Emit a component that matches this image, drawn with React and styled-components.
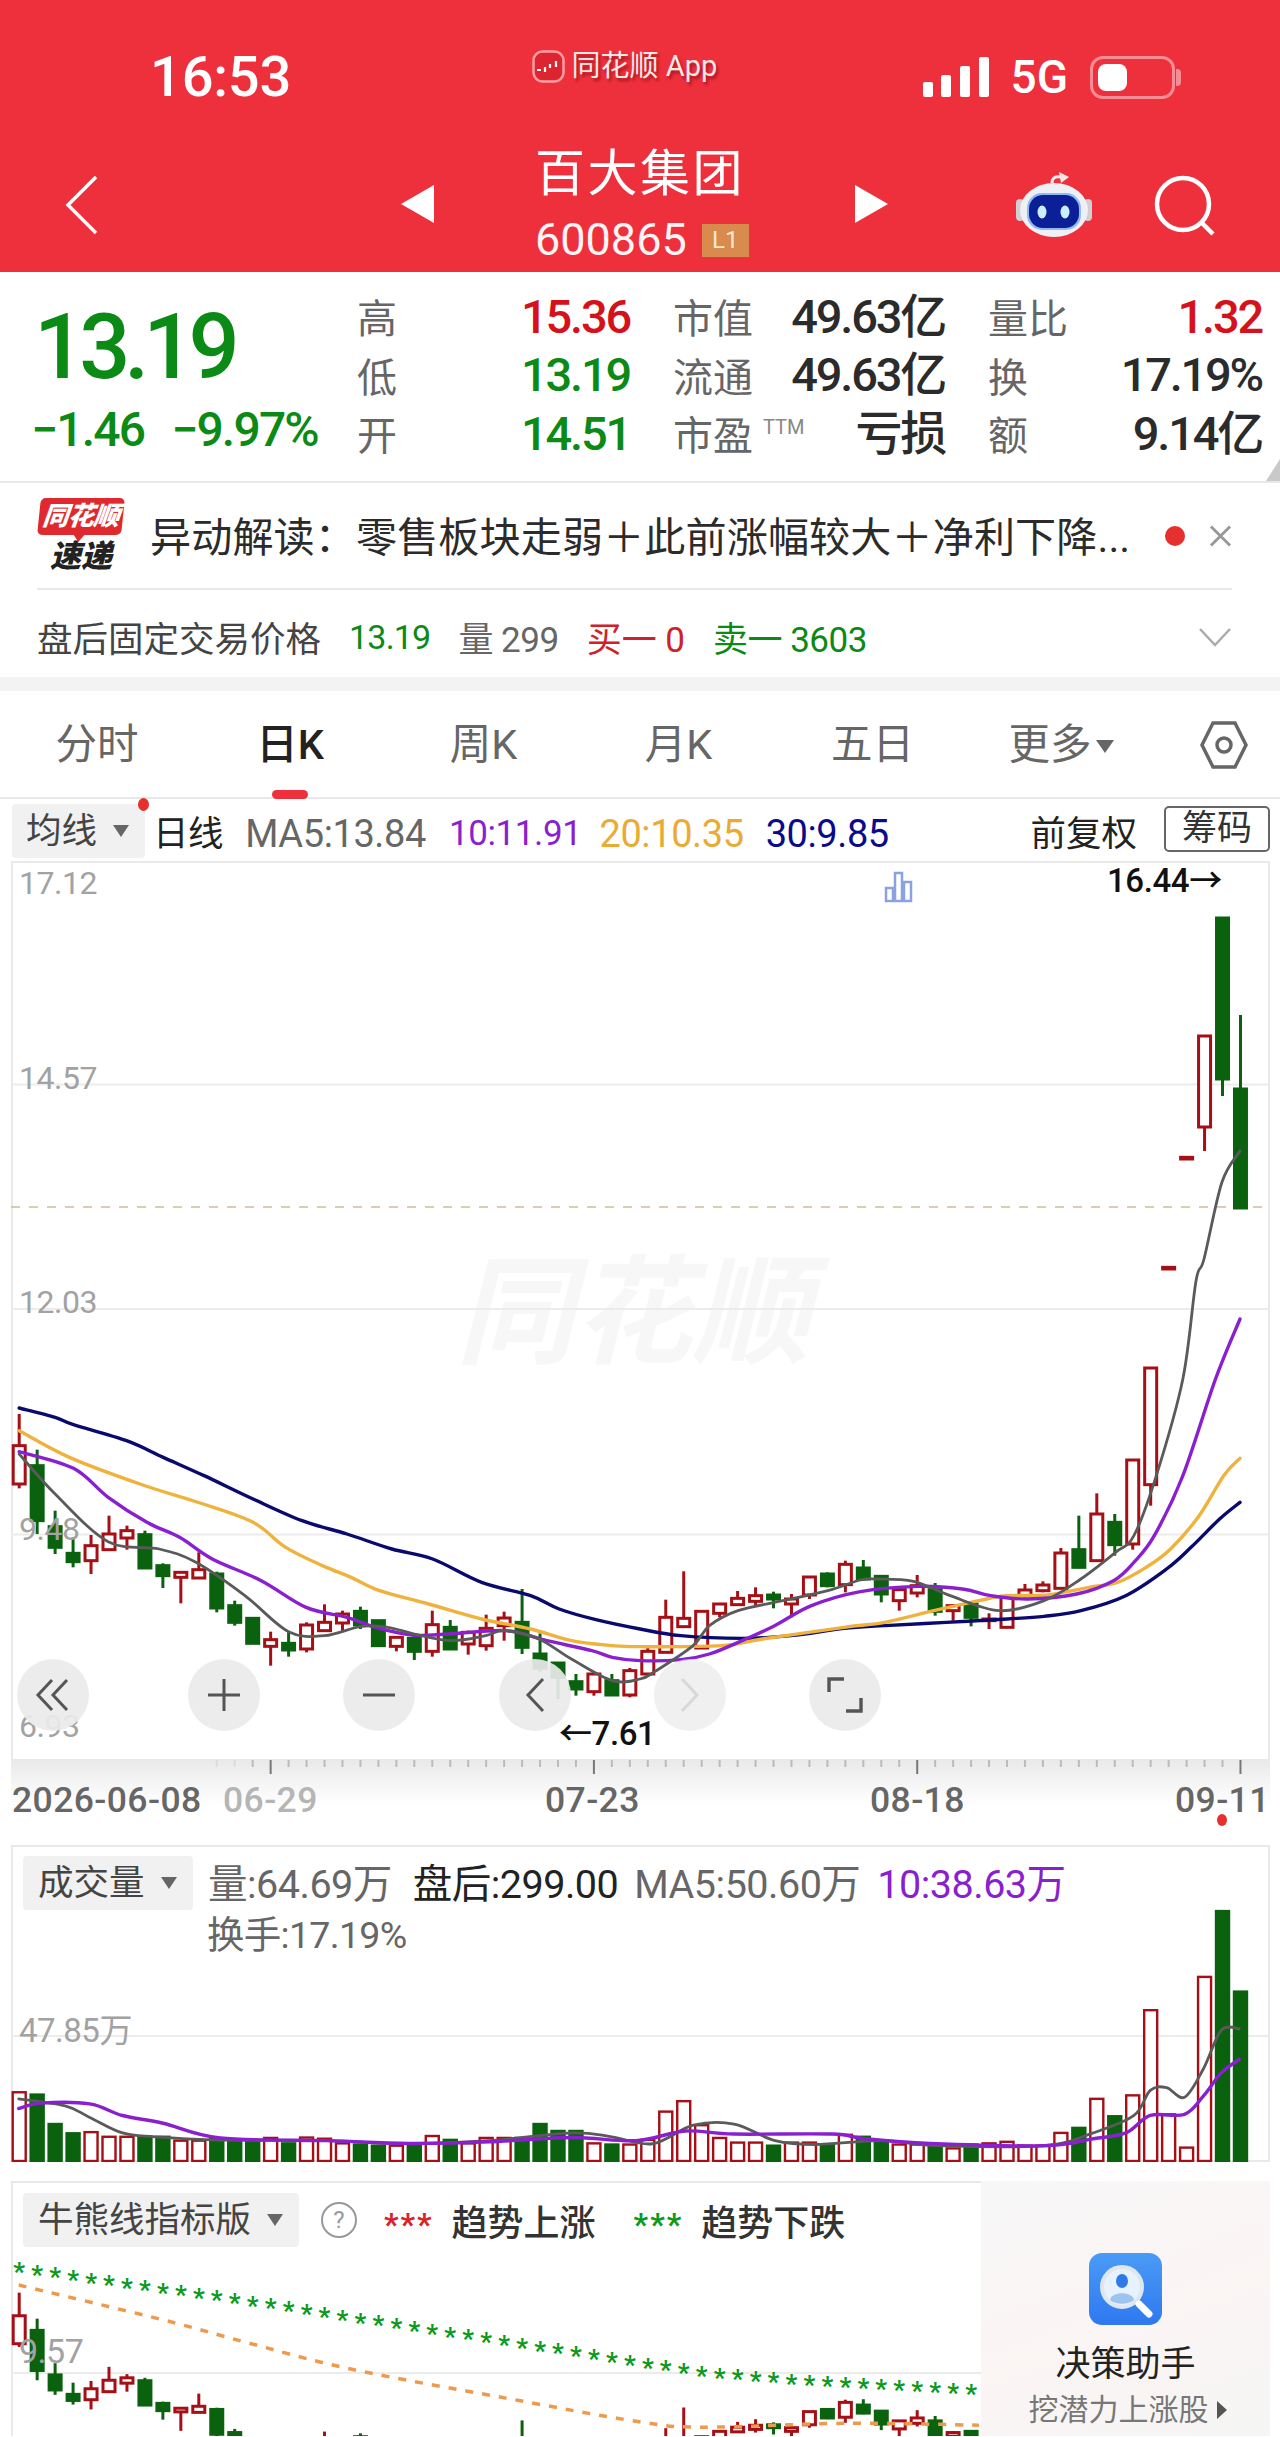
import React from 'react';
import styled, { createGlobalStyle } from 'styled-components';

const Global = createGlobalStyle`
  html, body { margin: 0; padding: 0; background: #fff; }
  body { font-family: Roboto, "Noto Sans CJK SC", sans-serif; color: #222; }
  * { box-sizing: border-box; }
`;

const RED = '#a50f15';
const GREEN = '#0a620f';

// candles: colour, high, bodyTop, bodyBottom, low. y values read off the chart at 3x, see py()
const candles = [
  ['r', 105, 200, 315, 328], ['g', 212, 260, 425, 465], ['g', 395, 443, 505, 525], ['g', 475, 523, 548, 565],
  ['r', 468, 500, 545, 585], ['r', 410, 465, 512, 512], ['r', 440, 455, 477, 512], ['g', 455, 467, 567, 567],
  ['g', 553, 560, 590, 627], ['r', 578, 580, 595, 673], ['r', 520, 572, 597, 597], ['g', 578, 585, 687, 700],
  ['g', 665, 680, 730, 740], ['g', 718, 718, 793, 793], ['r', 758, 782, 802, 860], ['g', 760, 793, 813, 833],
  ['r', 730, 738, 810, 820], ['r', 676, 730, 755, 755], ['r', 695, 705, 732, 755], ['g', 683, 697, 738, 750],
  ['g', 725, 725, 800, 800], ['r', 772, 775, 802, 817], ['g', 765, 778, 817, 843], ['r', 695, 737, 817, 833],
  ['g', 723, 745, 810, 813], ['r', 755, 760, 795, 827], ['r', 707, 748, 800, 815], ['r', 698, 717, 740, 785],
  ['g', 630, 730, 805, 825], ['g', 763, 825, 868, 878], ['g', 852, 852, 895, 960], ['g', 885, 908, 930, 950],
  ['r', 878, 885, 938, 950], ['g', 885, 905, 948, 948], ['r', 867, 875, 948, 955], ['r', 800, 817, 885, 890],
  ['r', 662, 715, 820, 820], ['r', 577, 718, 743, 743], ['r', 693, 697, 807, 810], ['r', 672, 675, 703, 715],
  ['r', 636, 658, 677, 680], ['r', 625, 650, 667, 680], ['g', 638, 648, 660, 688], ['r', 645, 660, 675, 715],
  ['r', 592, 594, 648, 660], ['g', 580, 585, 620, 625], ['r', 545, 556, 617, 640], ['g', 543, 567, 600, 605],
  ['g', 590, 592, 645, 670], ['r', 630, 632, 665, 695], ['r', 588, 620, 642, 655], ['g', 612, 632, 697, 710],
  ['r', 675, 680, 695, 725], ['g', 670, 675, 715, 742], ['r', 703, 720, 725, 750], ['r', 645, 652, 745, 745],
  ['r', 615, 633, 650, 655], ['r', 607, 618, 635, 640], ['r', 507, 522, 628, 630], ['g', 410, 512, 565, 568],
  ['r', 343, 405, 545, 548], ['g', 405, 430, 497, 530], ['r', 243, 243, 495, 512], ['r', -33, -33, 317, 380],
  ['r', -335, -335, -330, -330], ['r', -665, -665, -660, -660], ['r', -1029, -1029, -756, -684],
  ['g', -1383, -1383, -900, -849], ['g', -1092, -870, -513, -513],
];

const volTops = [
  680, 686, 762, 786, 783, 795, 795, 795, 795, 805, 805, 800, 805, 805, 798, 812, 797, 800, 812, 815, 818, 818, 818,
  793, 803, 812, 798, 798, 798, 762, 780, 780, 812, 815, 815, 803, 730, 703, 765, 798, 810, 810, 818, 810, 810, 815,
  790, 795, 805, 815, 815, 815, 825, 815, 812, 808, 818, 818, 785, 772, 697, 742, 688, 468, 737, 823, 382, 212, 420,
];

const cx = (i) => 19.2 + i * 17.96;
const py = (y) => 1380 + y / 3;
const left = (pts) => pts.map(([x, y]) => [x / 2.45, py(y)]);
const right = (pts) => pts.map(([x, y]) => [640 + x / 2.45, py(y)]);
const vol = (pts) => pts.map(([x, y]) => [x / 1.2258, 1830 + y / 2.583]);
const lowerY = (y) => 2317 + (y - 1447) * 0.73;

const smooth = (pts) => {
  let d = `M${pts[0][0]} ${pts[0][1]}`;
  for (let i = 0; i < pts.length - 1; i++) {
    const p0 = pts[i - 1] || pts[i];
    const p1 = pts[i];
    const p2 = pts[i + 1];
    const p3 = pts[i + 2] || p2;
    d += ` C${p1[0] + (p2[0] - p0[0]) / 6} ${p1[1] + (p2[1] - p0[1]) / 6} ${p2[0] - (p3[0] - p1[0]) / 6} ${p2[1] - (p3[1] - p1[1]) / 6} ${p2[0]} ${p2[1]}`;
  }
  return d;
};

const ma30 = [
  ...left([[47, 87], [135, 115], [180, 137], [310, 185], [400, 235], [500, 290], [620, 360], [740, 425], [850, 465], [960, 510], [1060, 540], [1180, 610], [1300, 650], [1370, 690], [1460, 722], [1568, 750]]),
  ...right([[100, 770], [250, 778], [370, 770], [500, 748], [600, 740], [750, 730], [900, 720], [990, 712], [1080, 695], [1190, 650], [1290, 570], [1350, 505], [1420, 420], [1470, 370]]),
];
const ma20 = [
  ...left([[47, 155], [170, 235], [350, 318], [490, 372], [620, 430], [700, 505], [790, 560], [860, 595], [930, 635], [1050, 675], [1180, 720], [1300, 750], [1400, 785], [1500, 800], [1568, 803]]),
  ...right([[200, 800], [300, 780], [500, 745], [600, 730], [720, 695], [830, 665], [900, 650], [1000, 648], [1100, 625], [1170, 610], [1240, 565], [1300, 510], [1370, 410], [1430, 290], [1470, 238]]),
];
const ma10 = [
  ...left([[47, 218], [180, 268], [265, 355], [360, 430], [440, 475], [520, 540], [640, 605], [750, 685], [850, 715], [920, 745], [1010, 768], [1100, 765], [1240, 755], [1340, 785], [1450, 815], [1500, 835], [1568, 845]]),
  ...right([[100, 842], [170, 825], [250, 785], [330, 740], [420, 680], [540, 638], [680, 622], [790, 630], [860, 650], [950, 660], [1070, 645], [1160, 605], [1210, 550], [1260, 470], [1330, 290], [1410, 0]]),
  [1240, 1320],
];
const ma5 = [
  ...left([[47, 225], [135, 345], [265, 488], [390, 510], [480, 550], [600, 650], [707, 758], [795, 770], [885, 742], [950, 745], [1015, 765], [1105, 785], [1190, 770], [1235, 755], [1320, 780], [1400, 840], [1500, 905], [1568, 900]]),
  ...right([[40, 875], [130, 800], [170, 740], [240, 695], [350, 665], [460, 635], [540, 603], [580, 600], [670, 607], [760, 650], [880, 695], [990, 665], [1080, 600], [1165, 520], [1210, 470], [1265, 290], [1330, 0]]),
  [1196, 1282], [1204, 1260], [1222, 1183], [1240, 1152],
];
const volMa5 = vol([[23, 697], [80, 715], [110, 745], [150, 785], [190, 795], [260, 803], [400, 805], [500, 813], [600, 805], [700, 785], [750, 795], [800, 813], [850, 765], [900, 762], [950, 805], [1000, 815], [1080, 805], [1150, 818], [1280, 818], [1340, 785], [1390, 740], [1410, 675], [1430, 668], [1452, 693], [1475, 620], [1497, 520], [1519, 516]]);
const volMa10 = vol([[23, 722], [50, 708], [110, 710], [150, 740], [200, 760], [270, 798], [400, 805], [500, 812], [600, 808], [700, 797], [780, 805], [840, 780], [900, 788], [1020, 788], [1060, 800], [1140, 812], [1280, 818], [1340, 800], [1380, 785], [1410, 740], [1452, 737], [1475, 690], [1497, 630], [1519, 595]]);
const stopLine = vol([[23, 1178], [200, 1268], [300, 1325], [430, 1395], [620, 1470], [780, 1530], [860, 1545], [1040, 1535], [1200, 1540]]);
const starLine = [[23, 1122], [300, 1205], [860, 1390], [1000, 1415], [1190, 1437]];

const starY = (x) => {
  for (let i = 0; i < starLine.length - 1; i++) {
    const [x0, y0] = starLine[i];
    const [x1, y1] = starLine[i + 1];
    if (x <= x1) return y0 + ((y1 - y0) * (x - x0)) / (x1 - x0);
  }
  return 1437;
};

const Page = styled.div`
  width: 1280px;
  height: 2437px;
  overflow: hidden;
  position: relative;
`;

/* red header */
const Header = styled.header`
  height: 272px;
  background: #ee303c;
  color: #fff;
  display: flex;
  flex-direction: column;
`;
const StatusBar = styled.div`
  height: 138px;
  padding: 42px 105px 0 150px;
  display: flex;
  justify-content: space-between;
  align-items: flex-start;
`;
const Clock = styled.span`
  font: 500 56px/70px Roboto, sans-serif;
  letter-spacing: -0.2px;
`;
const AppBack = styled.span`
  margin-left: 35px;
  display: flex;
  align-items: center;
  gap: 7px;
  font-size: 29px;
  line-height: 48px;
  color: #fde8e8;
  text-shadow: 2px 3px 3px rgba(110, 0, 10, 0.55);
`;
const StatusIcons = styled.div`
  display: flex;
  align-items: center;
  gap: 22px;
  height: 70px;
`;
const Signal = styled.span`
  display: flex;
  align-items: flex-end;
  gap: 8.6px;
  height: 40px;
`;
const SignalBar = styled.span`
  width: 10px;
  height: ${(p) => p.$h}px;
  background: #fff;
  border-radius: 2px;
`;
const NetLabel = styled.span`
  font: 500 46px/1 Roboto, sans-serif;
`;
const Battery = styled.span`
  width: 85px;
  height: 43px;
  border: 3px solid rgba(255, 255, 255, 0.45);
  border-radius: 13px;
  padding: 5px;
  position: relative;
  &::after {
    content: '';
    position: absolute;
    right: -9px;
    top: 10px;
    width: 5px;
    height: 17px;
    border-radius: 0 4px 4px 0;
    background: rgba(255, 255, 255, 0.45);
  }
`;
const BatteryLevel = styled.span`
  display: block;
  width: 29px;
  height: 100%;
  background: #fff;
  border-radius: 8px;
`;
const NavBar = styled.div`
  flex: 1;
  display: grid;
  grid-template-columns: 400px 135px 318px 163px 134px 130px;
  align-items: center;
`;
const Back = styled.svg`
  margin-left: 64px;
`;
const Flip = styled.svg`
  margin-top: -3px;
`;
const NameBlock = styled.div`
  display: flex;
  flex-direction: column;
  margin-top: -8px;
`;
const StockName = styled.div`
  font-size: 50px;
  line-height: 64px;
  letter-spacing: 2.5px;
  font-weight: 400;
`;
const CodeRow = styled.div`
  display: flex;
  align-items: center;
  gap: 15px;
  margin-top: 14px;
`;
const Code = styled.span`
  font: 400 45px/40px Roboto, sans-serif;
  opacity: 0.95;
`;
const Level = styled.span`
  width: 47px;
  height: 33px;
  background: #d98b4e;
  color: #ffe9d0;
  font: 400 24px/33px Roboto, sans-serif;
  text-align: center;
`;

/* quote */
const Quote = styled.section`
  height: 211px;
  display: flex;
  border-bottom: 2px solid #e8e8e8;
  position: relative;
`;
const QuoteLeft = styled.div`
  width: 357px;
  padding: 30px 0 0 33px;
  display: flex;
  flex-direction: column;
`;
const Price = styled.div`
  font: 500 90px/92px Roboto, sans-serif;
  letter-spacing: -6px;
  color: #0b8a15;
  margin-left: 1px;
`;
const Change = styled.div`
  display: flex;
  gap: 27px;
  font: 500 48px/60px Roboto, sans-serif;
  letter-spacing: -1.8px;
  color: #0b8a15;
  margin: 6px 0 0 -2px;
`;
const StatGrid = styled.div`
  display: grid;
  grid-template-columns: 273px 272px 274px;
  grid-auto-rows: 58.5px;
  column-gap: 43px;
  padding-top: 15px;
`;
const Stat = styled.div`
  display: flex;
  justify-content: space-between;
  align-items: center;
`;
const StatLabel = styled.span`
  font-size: 40px;
  color: #666;
  display: flex;
  align-items: flex-start;
`;
const Ttm = styled.span`
  font-size: 20px;
  color: #888;
  margin: 8px 0 0 10px;
  line-height: 30px;
`;
const StatValue = styled.span`
  font: 500 47px/1 Roboto, "Noto Sans CJK SC", sans-serif;
  letter-spacing: -2.2px;
  color: ${(p) => p.$color || '#2b2b2b'};
`;
const Fold = styled.span`
  position: absolute;
  right: 0;
  bottom: 0;
  border-left: 14px solid transparent;
  border-bottom: 22px solid #c9c9c9;
`;

/* alert */
const Alert = styled.section`
  height: 194px;
`;
const AlertTop = styled.div`
  height: 107px;
  margin: 0 48px 0 37px;
  display: flex;
  align-items: center;
  border-bottom: 2px solid #e8e8e8;
`;
const Speed = styled.div`
  width: 88px;
  display: flex;
  flex-direction: column;
  align-items: center;
  flex: none;
`;
const SpeedTag = styled.span`
  width: 84px;
  height: 37px;
  border-radius: 5px;
  background: #e0292f;
  color: #fff;
  font-size: 26px;
  font-style: italic;
  font-weight: 900;
  line-height: 36px;
  text-align: center;
  letter-spacing: -0.5px;
  transform: skewX(-6deg);
  position: relative;
  &::after {
    content: '';
    position: absolute;
    bottom: -7px;
    left: 36px;
    border-left: 6px solid transparent;
    border-right: 6px solid transparent;
    border-top: 8px solid #e0292f;
  }
`;
const SpeedWord = styled.span`
  font-size: 31px;
  font-style: italic;
  font-weight: 900;
  line-height: 32px;
  color: #222;
  margin-top: 6px;
`;
const AlertText = styled.span`
  margin-left: 25px;
  padding-bottom: 3px;
  font-size: 41.1px;
  color: #2b2b2b;
  white-space: nowrap;
  letter-spacing: 0.1px;
  width: 975px;
`;
const RedDot = styled.span`
  width: 20px;
  height: 20px;
  border-radius: 50%;
  background: #e5302e;
  margin-left: 40px;
  flex: none;
`;
const AlertRow = styled.div`
  height: 87px;
  padding: 6px 48px 0 37px;
  display: flex;
  align-items: center;
  font-size: 35.5px;
  color: #444;
  gap: 28px;
`;
const AfterItem = styled.span`
  color: ${(p) => p.$color || '#666'};
  letter-spacing: ${(p) => p.$ls || '0'};
  font-size: ${(p) => p.$size || '35px'};
`;
const Chev = styled.svg`
  margin-left: auto;
`;
const Gap = styled.div`
  height: 14px;
  background: #f3f3f3;
`;

/* tabs */
const Tabs = styled.nav`
  height: 108px;
  display: grid;
  grid-template-columns: 194px 192px 195px 195px 193px 184px 127px;
  align-items: center;
  border-bottom: 2px solid #e8e8e8;
`;
const Tab = styled.span`
  position: relative;
  text-align: center;
  font-size: 41.5px;
  line-height: 108px;
  color: ${(p) => (p.$active ? '#222' : '#666')};
  font-weight: ${(p) => (p.$active ? 500 : 400)};
  &::after {
    content: '';
    display: ${(p) => (p.$active ? 'block' : 'none')};
    position: absolute;
    left: 78px;
    bottom: 0;
    width: 36px;
    height: 9px;
    border-radius: 5px;
    background: #ee303c;
  }
`;
const TabArrow = styled.span`
  display: inline-block;
  margin-left: 4px;
  vertical-align: 6px;
  border-left: 9px solid transparent;
  border-right: 9px solid transparent;
  border-top: 13px solid #666;
`;
const SettingsIcon = styled.svg`
  justify-self: center;
  margin-left: 14px;
`;

/* ma row */
const MaRow = styled.div`
  height: 62px;
  padding: 5px 10px 0 12px;
  display: flex;
  align-items: flex-start;
`;
const Dropdown = styled.span`
  position: relative;
  width: ${(p) => p.$w}px;
  height: 54px;
  background: #f1f1f1;
  border-radius: 4px;
  padding-left: ${(p) => p.$pad || 15}px;
  font-size: 35.5px;
  line-height: 52px;
  color: #444;
  flex: none;
  display: flex;
  align-items: center;
  &::after {
    content: '';
    position: absolute;
    right: 16px;
    top: 21px;
    border-left: 8px solid transparent;
    border-right: 8px solid transparent;
    border-top: 12px solid #666;
  }
`;
const Notify = styled.i`
  position: absolute;
  right: -4px;
  top: -6px;
  width: 11px;
  height: 13px;
  border-radius: 50%;
  background: #e5302e;
`;
const MaItem = styled.span`
  color: ${(p) => p.$color};
  margin-left: ${(p) => p.$gap}px;
  line-height: 60px;
  letter-spacing: -0.4px;
  white-space: nowrap;
  font-size: ${(p) => p.$size || '38px'};
`;
const Flags = styled.span`
  margin-left: auto;
  color: #222;
  font-size: 35.5px;
  line-height: 60px;
`;
const Chips = styled.span`
  margin: 2px 0 0 27px;
  width: 106px;
  height: 46px;
  border: 2px solid #666;
  border-radius: 5px;
  text-align: center;
  font-size: 35px;
  line-height: 42px;
  color: #333;
`;

/* charts */
const Frame = styled.div`
  position: relative;
  margin-left: 11px;
  width: 1259px;
  height: ${(p) => p.$h}px;
  border: 2px solid #e9e9e9;
  border-bottom-width: ${(p) => p.$bottom ?? 2}px;
`;
const Plot = styled.svg`
  position: absolute;
  left: -2px;
  top: -2px;
`;
const AxisValue = styled.span`
  position: absolute;
  left: 6px;
  top: ${(p) => p.$y}px;
  font-size: ${(p) => p.$size || '32px'};
  line-height: 36px;
  letter-spacing: -0.5px;
  color: #a2a2a2;
`;
const Extreme = styled.span`
  position: absolute;
  left: ${(p) => p.$x}px;
  top: ${(p) => p.$y}px;
  font-size: 33px;
  font-weight: 500;
  line-height: 36px;
  color: #111;
  letter-spacing: -0.4px;
  white-space: nowrap;
`;
const Watermark = styled.span`
  position: absolute;
  left: 443px;
  top: 392px;
  font-size: 118px;
  font-weight: 700;
  font-style: italic;
  line-height: 118px;
  white-space: nowrap;
  color: #f7f7f7;
`;
const Controls = styled.div`
  position: absolute;
  left: 4px;
  top: 796px;
  width: 864px;
  display: flex;
  justify-content: space-between;
`;
const Control = styled.span`
  width: 72px;
  height: 72px;
  border-radius: 50%;
  background: rgba(234, 234, 234, 0.92);
  display: flex;
  align-items: center;
  justify-content: center;
  opacity: ${(p) => (p.$dim ? 0.75 : 1)};
  &:first-child {
    margin-right: 16px;
  }
`;
const Axis = styled.div`
  position: relative;
  height: 86px;
  margin-left: 11px;
  width: 1259px;
  background: linear-gradient(#e9e9e9, #fff 46px);
`;
const Ticks = styled.svg`
  position: absolute;
  left: 0;
  top: 0;
`;
const DateLabel = styled.span`
  position: absolute;
  left: ${(p) => p.$x}px;
  top: 19px;
  font-size: 35.5px;
  line-height: 44px;
  font-weight: 500;
  letter-spacing: 0.4px;
  color: ${(p) => p.$color || '#666'};
`;
const LiveDot = styled.i`
  position: absolute;
  left: 1206px;
  top: 55px;
  width: 10px;
  height: 12px;
  border-radius: 50%;
  background: #e5302e;
`;
const VolHead = styled.div`
  position: absolute;
  left: 10px;
  top: 9px;
  display: flex;
  align-items: flex-start;
`;
const VolLine = styled.span`
  color: ${(p) => p.$color || '#666'};
  margin-left: ${(p) => p.$gap}px;
  font-size: 39.5px;
  line-height: 58px;
  letter-spacing: -0.5px;
  white-space: nowrap;
`;
const Turnover = styled.div`
  position: absolute;
  left: 194px;
  top: 63px;
  font-size: 37.5px;
  line-height: 50px;
  color: #666;
  letter-spacing: -0.7px;
`;
const Spacer = styled.div`
  height: 19px;
`;
const BullHead = styled.div`
  position: absolute;
  left: 10px;
  top: 10px;
  display: flex;
  align-items: center;
  font-size: 36px;
  color: #222;
`;
const Help = styled.span`
  width: 36px;
  height: 36px;
  margin-left: 22px;
  border-radius: 50%;
  border: 2px solid #999;
  color: #999;
  font-size: 24px;
  line-height: 32px;
  text-align: center;
`;
const Stars = styled.span`
  color: ${(p) => p.$color};
  font-size: 32px;
  font-weight: 700;
  margin-left: ${(p) => p.$gap}px;
  letter-spacing: 2px;
  line-height: 44px;
  height: 36px;
`;
const LegendWord = styled.span`
  margin-left: 18px;
  font-weight: 500;
  color: #333;
`;
const Promo = styled.aside`
  position: absolute;
  right: -2px;
  top: -2px;
  bottom: 0;
  width: 289px;
  background: linear-gradient(160deg, #f7f7f7, #fbf5f4 55%, #f5f5f5);
  display: flex;
  flex-direction: column;
  align-items: center;
  padding-top: 72px;
`;
const PromoTitle = styled.div`
  margin-top: 15px;
  font-size: 35px;
  line-height: 50px;
  color: #222;
`;
const PromoSub = styled.div`
  font-size: 30px;
  line-height: 40px;
  color: #777;
  display: flex;
  align-items: center;
  gap: 8px;
  margin-left: 4px;
  &::after {
    content: '';
    border-top: 9px solid transparent;
    border-bottom: 9px solid transparent;
    border-left: 10px solid #555;
  }
`;

const Candle = ({ c, i, map }) => {
  const [col, hi, top, bot, lo] = c;
  const stroke = col === 'r' ? RED : GREEN;
  const x = cx(i);
  const [yh, yt, yb, yl] = [hi, top, bot, lo].map((v) => map(py(v)));
  return (
    <g stroke={stroke} strokeWidth="3" fill={col === 'r' ? '#fff' : GREEN}>
      <line x1={x} x2={x} y1={yh} y2={yt} />
      <line x1={x} x2={x} y1={yb} y2={yl} />
      <rect x={x - 6} y={yt} width="12" height={Math.max(yb - yt, 1)} />
    </g>
  );
};

const MainChart = () => (
  <Plot width="1259" height="898" viewBox="11 862 1259 898">
    {[1085.5, 1310, 1535.5].map((y) => (
      <line key={y} x1="11" x2="1270" y1={y} y2={y} stroke="#ececec" strokeWidth="2" />
    ))}
    <line x1="11" x2="1270" y1="1208" y2="1208" stroke="#cdbf9a" strokeWidth="1.6" strokeDasharray="9 9" />
    <path d="M886 902v-13h7v13zM895 902v-28h7v28zM904 902v-19h7v19z" fill="none" stroke="#8aa2e0" strokeWidth="2.5" />
    {candles.map((c, i) => (
      <Candle key={i} c={c} i={i} map={(y) => y} />
    ))}
    <g fill="none" strokeLinecap="round">
      <path d={smooth(ma30)} stroke="#0a0a6e" strokeWidth="3.4" />
      <path d={smooth(ma20)} stroke="#efb23c" strokeWidth="3.4" />
      <path d={smooth(ma10)} stroke="#8a1fd0" strokeWidth="3.4" />
      <path d={smooth(ma5)} stroke="#5a5a5a" strokeWidth="2.8" />
    </g>
  </Plot>
);

const VolumeChart = () => (
  <Plot width="1259" height="317" viewBox="11 1846 1259 317">
    <line x1="11" x2="1270" y1="2037" y2="2037" stroke="#ececec" strokeWidth="2" />
    {volTops.map((t, i) => {
      const y = 1830 + t / 2.583;
      const isRed = candles[i][0] === 'r';
      return (
        <rect
          key={i}
          x={cx(i) - 6.5}
          y={y}
          width="13"
          height={2162 - y}
          fill={isRed ? '#fff' : GREEN}
          stroke={isRed ? RED : GREEN}
          strokeWidth="2.4"
        />
      );
    })}
    <g fill="none" strokeLinecap="round">
      <path d={smooth(volMa5)} stroke="#5a5a5a" strokeWidth="2.8" />
      <path d={smooth(volMa10)} stroke="#8a1fd0" strokeWidth="3.4" />
    </g>
  </Plot>
);

const BullChart = () => (
  <Plot width="972" height="255" viewBox="11 2182 972 255">
    <line x1="11" x2="983" y1="2374" y2="2374" stroke="#ececec" strokeWidth="2" />
    {candles.slice(0, 54).map((c, i) => (
      <Candle key={i} c={c} i={i} map={lowerY} />
    ))}
    <path d={smooth(stopLine)} fill="none" stroke="#ee9a4d" strokeWidth="3.5" strokeDasharray="8 9" />
    {candles.slice(0, 54).map((_, i) => {
      const z = 23 + i * 22;
      return (
        <text key={i} x={cx(i)} y={1830 + starY(z) / 2.583 + 18} textAnchor="middle" fontSize="26" fontWeight="700" fontFamily="Roboto" fill="#0c9a1d">*</text>
      );
    })}
  </Plot>
);

const stats = [
  ['高', '15.36', '#d5121c'], ['市值', '49.63亿'], ['量比', '1.32', '#d5121c'],
  ['低', '13.19', '#0b8a15'], ['流通', '49.63亿'], ['换', '17.19%'],
  ['开', '14.51', '#0b8a15'], ['市盈', '亏损', null, true], ['额', '9.14亿'],
];

const tabs = ['分时', '日K', '周K', '月K', '五日'];

const tickXs = Array.from({ length: 69 }, (_, i) => i).filter((i) => i > 10);

export default function App() {
  return (
    <Page>
      <Global />
      <Header>
        <StatusBar>
          <Clock>16:53</Clock>
          <AppBack>
            <svg width="33" height="33" viewBox="0 0 33 33">
              <rect x="1.5" y="1.5" width="30" height="30" rx="9" fill="#dc2530" stroke="#ff9da3" strokeWidth="2.5" />
              <path d="M5 20h4M13 17v5M18 14v4M24 11v6" stroke="#fff" strokeWidth="2.2" />
            </svg>
            同花顺 App
          </AppBack>
          <StatusIcons>
            <Signal>
              <SignalBar $h={15} />
              <SignalBar $h={22} />
              <SignalBar $h={31} />
              <SignalBar $h={40} />
            </Signal>
            <NetLabel>5G</NetLabel>
            <Battery>
              <BatteryLevel />
            </Battery>
          </StatusIcons>
        </StatusBar>
        <NavBar>
          <Back width="36" height="62" viewBox="0 0 36 62">
            <path d="M32 3 4 31l28 28" fill="none" stroke="#fff" strokeWidth="3.5" />
          </Back>
          <Flip width="36" height="40" viewBox="0 0 36 40">
            <path d="M34 1v38L1 20z" fill="#fff" />
          </Flip>
          <NameBlock>
            <StockName>百大集团</StockName>
            <CodeRow>
              <Code>600865</Code>
              <Level>L1</Level>
            </CodeRow>
          </NameBlock>
          <Flip width="36" height="40" viewBox="0 0 36 40">
            <path d="M2 1v38l33-19z" fill="#fff" />
          </Flip>
          <svg width="76" height="66" viewBox="0 0 76 66">
            <rect x="0" y="27" width="8" height="22" rx="4" fill="#cfcfd4" />
            <rect x="68" y="27" width="8" height="22" rx="4" fill="#cfcfd4" />
            <ellipse cx="38" cy="38" rx="34" ry="27" fill="#eef0f4" />
            <rect x="11" y="21" width="54" height="37" rx="15" fill="#8fb8f5" />
            <rect x="13" y="23" width="50" height="33" rx="14" fill="#0b1f96" />
            <ellipse cx="26" cy="40" rx="4.5" ry="6.5" fill="#cdeeff" />
            <ellipse cx="49" cy="40" rx="4.5" ry="6.5" fill="#cdeeff" />
            <path d="M36 11c0-5 3-7 9-6" fill="none" stroke="#f4e7e7" strokeWidth="3" />
            <path d="m43 0 10 5-8 6z" fill="#f4e7e7" />
          </svg>
          <svg width="66" height="66" viewBox="0 0 66 66">
            <circle cx="33" cy="32" r="26" fill="none" stroke="#fff" strokeWidth="4.5" />
            <path d="m52 51 11 11" fill="none" stroke="#fff" strokeWidth="4.5" />
          </svg>
        </NavBar>
      </Header>

      <Quote>
        <QuoteLeft>
          <Price>13.19</Price>
          <Change>
            <span>−1.46</span>
            <span>−9.97%</span>
          </Change>
        </QuoteLeft>
        <StatGrid>
          {stats.map(([label, value, color, ttm]) => (
            <Stat key={label}>
              <StatLabel>
                {label}
                {ttm && <Ttm>TTM</Ttm>}
              </StatLabel>
              <StatValue $color={color}>{value}</StatValue>
            </Stat>
          ))}
        </StatGrid>
        <Fold />
      </Quote>

      <Alert>
        <AlertTop>
          <Speed>
            <SpeedTag>同花顺</SpeedTag>
            <SpeedWord>速递</SpeedWord>
          </Speed>
          <AlertText>异动解读：零售板块走弱＋此前涨幅较大＋净利下降...</AlertText>
          <RedDot />
          <svg width="24" height="24" viewBox="0 0 24 24" style={{ marginLeft: 24 }}>
            <path d="m2 2 20 20M22 2 2 22" stroke="#999" strokeWidth="3" />
          </svg>
        </AlertTop>
        <AlertRow>
          <span>盘后固定交易价格</span>
          <AfterItem $color="#0b8a15" $size="34px" $ls="-0.8px">13.19</AfterItem>
          <AfterItem $ls="-0.5px">量 299</AfterItem>
          <AfterItem $color="#d0212b">买一 0</AfterItem>
          <AfterItem $color="#0b8a15" $ls="-0.5px">卖一 3603</AfterItem>
          <Chev width="34" height="20" viewBox="0 0 34 20">
            <path d="m2 2 15 16L32 2" fill="none" stroke="#aaa" strokeWidth="2.5" />
          </Chev>
        </AlertRow>
      </Alert>
      <Gap />

      <Tabs>
        {tabs.map((t) => (
          <Tab key={t} $active={t === '日K'}>{t}</Tab>
        ))}
        <Tab>
          更多
          <TabArrow />
        </Tab>
        <SettingsIcon width="50" height="50" viewBox="0 0 50 50">
          <path d="M14 3h22l11 22-11 22H14L3 25z" fill="none" stroke="#666" strokeWidth="3.5" />
          <circle cx="25" cy="25" r="7" fill="none" stroke="#666" strokeWidth="3.5" />
        </SettingsIcon>
      </Tabs>

      <MaRow>
        <Dropdown $w={133} $pad={14}>
          均线
          <Notify />
        </Dropdown>
        <MaItem $gap={8} $size="35.5px" $color="#222">日线</MaItem>
        <MaItem $gap={22} $color="#666">MA5:13.84</MaItem>
        <MaItem $gap={23} $size="35px" $color="#8a1fd0">10:11.91</MaItem>
        <MaItem $gap={18} $color="#e9ab35">20:10.35</MaItem>
        <MaItem $gap={22} $size="38px" $color="#0a0a8a">30:9.85</MaItem>
        <Flags>前复权</Flags>
        <Chips>筹码</Chips>
      </MaRow>

      <Frame $h={898} $bottom={0}>
        <Watermark>同花顺</Watermark>
        <MainChart />
        <AxisValue $y={2}>17.12</AxisValue>
        <AxisValue $y={197}>14.57</AxisValue>
        <AxisValue $y={421}>12.03</AxisValue>
        <AxisValue $y={648}>9.48</AxisValue>
        <AxisValue $y={845}>6.93</AxisValue>
        <Extreme $x={1094} $y={0}>16.44→</Extreme>
        <Extreme $x={546} $y={853}>←7.61</Extreme>
        <Controls>
          <Control>
            <svg width="36" height="36" viewBox="0 0 36 36">
              <path d="M17 3 3 18l14 15M32 3 18 18l14 15" fill="none" stroke="#555" strokeWidth="3" />
            </svg>
          </Control>
          <Control>
            <svg width="36" height="36" viewBox="0 0 36 36">
              <path d="M18 2v32M2 18h32" stroke="#555" strokeWidth="3" />
            </svg>
          </Control>
          <Control>
            <svg width="36" height="36" viewBox="0 0 36 36">
              <path d="M2 18h32" stroke="#555" strokeWidth="3" />
            </svg>
          </Control>
          <Control>
            <svg width="20" height="36" viewBox="0 0 20 36">
              <path d="M18 2 3 18l15 16" fill="none" stroke="#555" strokeWidth="3" />
            </svg>
          </Control>
          <Control $dim>
            <svg width="20" height="36" viewBox="0 0 20 36">
              <path d="m2 2 15 16L2 34" fill="none" stroke="#ccc" strokeWidth="3" />
            </svg>
          </Control>
          <Control>
            <svg width="38" height="38" viewBox="0 0 38 38">
              <path d="M3 16V3h15M35 22v13H20" fill="none" stroke="#555" strokeWidth="3.4" />
            </svg>
          </Control>
        </Controls>
      </Frame>

      <Axis>
        <Ticks width="1259" height="24" viewBox="11 0 1259 24">
          {tickXs.map((i) => {
            const major = [14, 32, 50, 68].includes(i);
            return (
              <line
                key={i}
                x1={cx(i)}
                x2={cx(i)}
                y1="1"
                y2={major ? 15 : 8}
                stroke={major ? '#777' : '#bbb'}
                strokeWidth="2"
                opacity={i < 13 ? 0.3 : 1}
              />
            );
          })}
        </Ticks>
        <DateLabel $x={1}>2026-06-08</DateLabel>
        <DateLabel $x={212} $color="#b5b5b5">06-29</DateLabel>
        <DateLabel $x={534}>07-23</DateLabel>
        <DateLabel $x={859}>08-18</DateLabel>
        <DateLabel $x={1164}>09-11</DateLabel>
        <LiveDot />
      </Axis>

      <Frame $h={317}>
        <VolumeChart />
        <AxisValue $y={166} $size="33px">47.85万</AxisValue>
        <VolHead>
          <Dropdown $w={170}>成交量</Dropdown>
          <VolLine $gap={15}>量:64.69万</VolLine>
          <VolLine $gap={21} $color="#222">盘后:299.00</VolLine>
          <VolLine $gap={16}>MA5:50.60万</VolLine>
          <VolLine $gap={17} $color="#8a1fd0">10:38.63万</VolLine>
        </VolHead>
        <Turnover>换手:17.19%</Turnover>
      </Frame>
      <Spacer />

      <Frame $h={255} $bottom={0}>
        <BullChart />
        <AxisValue $y={150} $size="34px">9.57</AxisValue>
        <BullHead>
          <Dropdown $w={276}>牛熊线指标版</Dropdown>
          <Help>?</Help>
          <Stars $gap={27} $color="#d8232c">***</Stars>
          <LegendWord>趋势上涨</LegendWord>
          <Stars $gap={38} $color="#0c9a1d">***</Stars>
          <LegendWord>趋势下跌</LegendWord>
        </BullHead>
        <Promo>
          <svg width="73" height="72" viewBox="0 0 73 72">
            <defs>
              <linearGradient id="promoBg" x1="0" y1="0" x2="0" y2="1">
                <stop offset="0" stopColor="#4a9bf6" />
                <stop offset="1" stopColor="#2f78f0" />
              </linearGradient>
            </defs>
            <rect width="73" height="72" rx="13" fill="url(#promoBg)" />
            <circle cx="33" cy="34" r="20" fill="#e6f2fd" stroke="#dfe6ee" strokeWidth="4" />
            <ellipse cx="33" cy="28" rx="6" ry="7" fill="#2f7ae8" />
            <path d="M21 47c1-9 23-9 24 0-6 5-18 5-24 0z" fill="#9cc4ee" />
            <path d="m50 51 10 10" stroke="#fff" strokeWidth="7" strokeLinecap="round" />
          </svg>
          <PromoTitle>决策助手</PromoTitle>
          <PromoSub>挖潜力上涨股</PromoSub>
        </Promo>
      </Frame>
    </Page>
  );
}
